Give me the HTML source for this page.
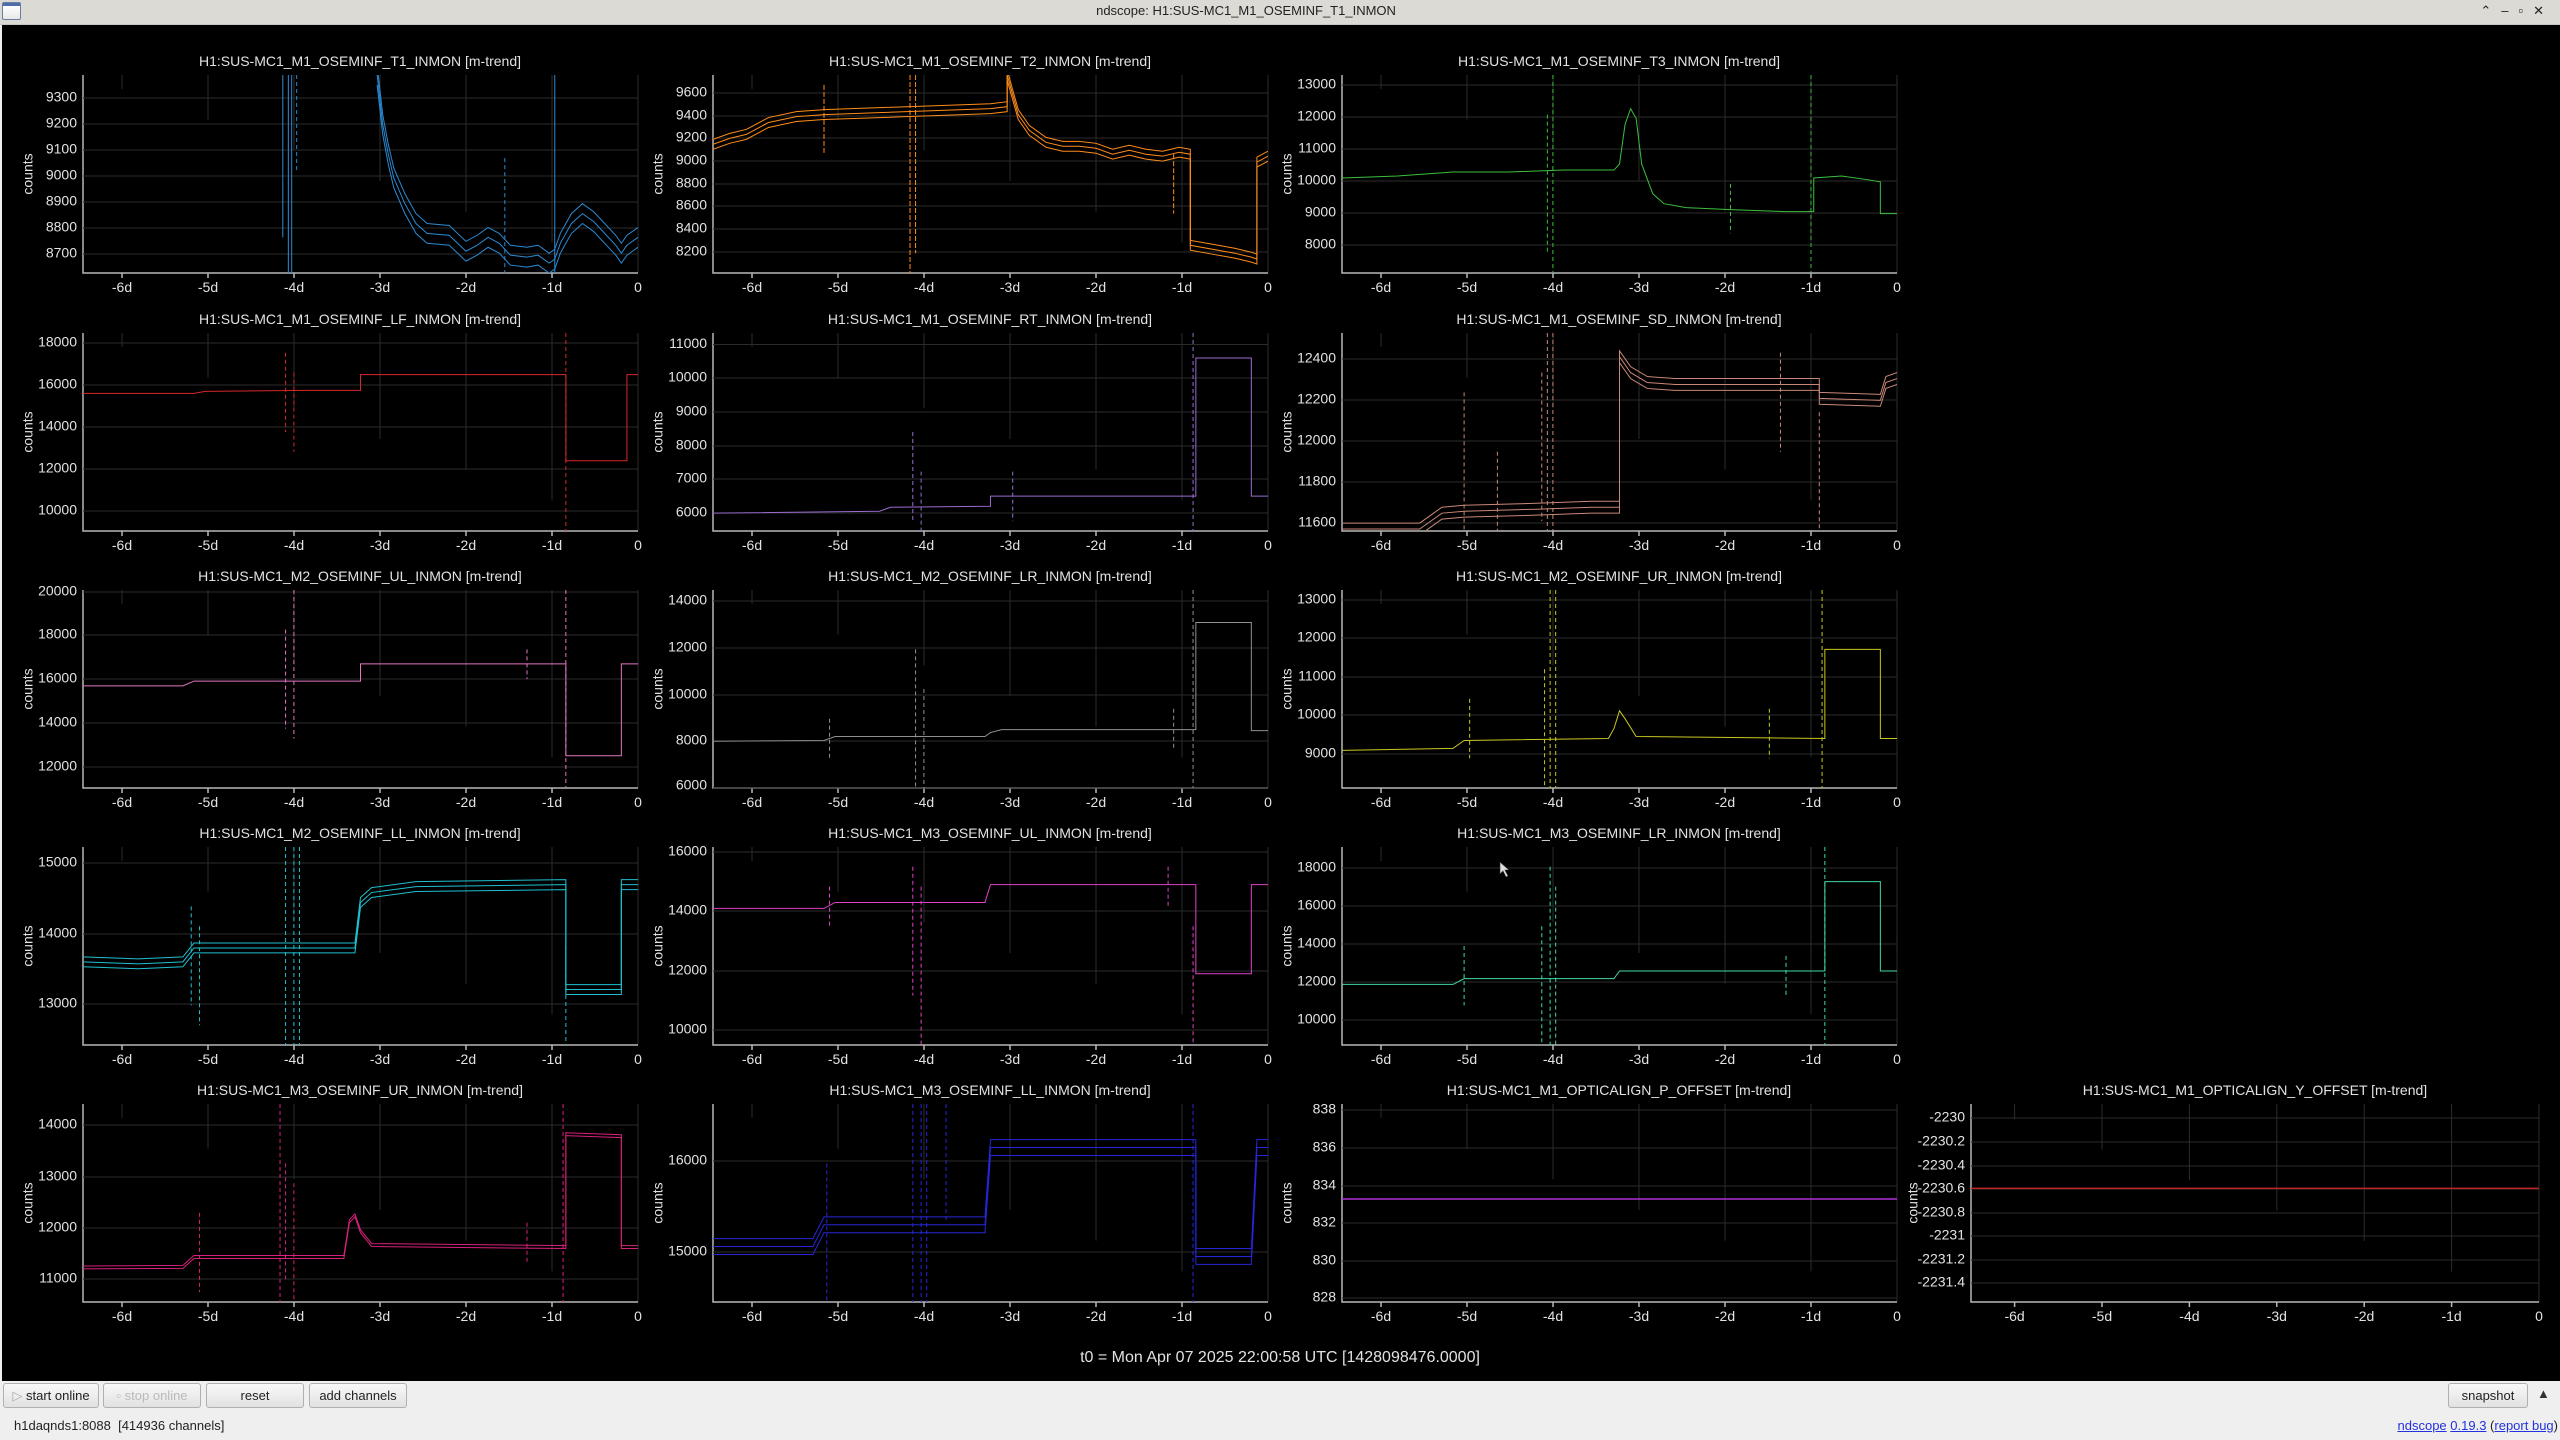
<!DOCTYPE html>
<html><head><meta charset="utf-8"><style>
*{margin:0;padding:0;box-sizing:border-box}
body{width:2560px;height:1440px;overflow:hidden;background:#efefef;font-family:"Liberation Sans",sans-serif;position:relative}
#tb{position:absolute;left:0;top:0;width:2560px;height:25px;background:#dcdad5;border-bottom:1px solid #c8c6c0;font-size:13px;color:#222;line-height:22px}
#tt{position:absolute;left:1246px;top:0;transform:translateX(-50%);white-space:nowrap}
#ic{position:absolute;left:2px;top:2px;width:19px;height:18px;border:1px solid #6a7fa0;border-radius:2px;background:linear-gradient(#4c6fa8 0 3px,#fff 3px,#e8e8e8)}
#wc{position:absolute;right:6px;top:0;font-size:13px;letter-spacing:10px}
#main{position:absolute;left:2px;top:25px;width:2558px;height:1356px;background:#000}
svg text{font-family:"Liberation Sans",sans-serif}
.t{font-size:14px;fill:#e2e2e2}
.yl{text-anchor:end;dominant-baseline:middle}
.xl{text-anchor:middle}
.ti{text-anchor:middle;font-size:14px;fill:#e2e2e2}
.g{stroke:#2c2c2c;stroke-width:1}
.ax{stroke:#b8b8b8;stroke-width:1.5}
.d path,.d use{vector-effect:non-scaling-stroke;fill:none}
.btn{position:absolute;top:1383px;height:25px;border:1px solid #b0b0b0;border-radius:3px;background:linear-gradient(#f8f8f8,#e2e2e2);font-size:13px;color:#222;text-align:center;line-height:23px;white-space:nowrap}
</style></head><body>
<div id="tb"><div id="ic"></div><div id="tt">ndscope: H1:SUS-MC1_M1_OSEMINF_T1_INMON</div><div id="wc">⌃–▫✕</div></div>
<div id="main"></div>
<svg width="2560" height="1381" style="position:absolute;left:0;top:0">
<defs>
<g id="fr">
<path class="g" d="M39,0V198M125,0V198M211,0V198M297,0V198M383,0V198M469,0V198M555,0V198"/>
<path class="ax" d="M0,0V198H555M39,198v5M125,198v5M211,198v5M297,198v5M383,198v5M469,198v5"/>
</g>
<g id="fr4">
<path class="g" d="M43.6,0V198M131,0V198M218.4,0V198M305.8,0V198M393.2,0V198M480.6,0V198M568,0V198"/>
<path class="ax" d="M0,0V198H568M43.6,198v5M131,198v5M218.4,198v5M305.8,198v5M393.2,198v5M480.6,198v5"/>
</g>
</defs>

<!-- ROW 1 -->
<g transform="translate(83,75)">
<use href="#fr"/>
<path class="g" d="M0,23H555M0,49H555M0,75H555M0,101H555M0,127H555M0,153H555M0,179H555"/>
<text class="ti" x="277" y="-9">H1:SUS-MC1_M1_OSEMINF_T1_INMON [m-trend]</text>
<text class="t" transform="translate(-54,99) rotate(-90)" text-anchor="middle" dominant-baseline="middle">counts</text>
<text class="t yl" x="-6" y="23">9300</text><text class="t yl" x="-6" y="49">9200</text><text class="t yl" x="-6" y="75">9100</text><text class="t yl" x="-6" y="101">9000</text><text class="t yl" x="-6" y="127">8900</text><text class="t yl" x="-6" y="153">8800</text><text class="t yl" x="-6" y="179">8700</text>
<text class="t xl" x="39" y="217">-6d</text><text class="t xl" x="125" y="217">-5d</text><text class="t xl" x="211" y="217">-4d</text><text class="t xl" x="297" y="217">-3d</text><text class="t xl" x="383" y="217">-2d</text><text class="t xl" x="469" y="217">-1d</text><text class="t xl" x="555" y="217">0</text>
<svg class="d" width="555" height="198" viewBox="0 0 100 100" preserveAspectRatio="none" stroke="#2a8ad4" stroke-width="1">
<path id="p1" d="M53,0 L54,25 L55,40 L56,52 L58,65 L60,75 L62,80 L66,81 L69,89 L71,86 L73,82 L75,85 L77,91 L80,92 L82,91 L84,95 L85,93 L86,85 L88,75 L90,70 L92,74 L94,80 L96,86 L97,90 L98,86 L100,82"/>
<use href="#p1" transform="translate(0,-5)"/><use href="#p1" transform="translate(0,5)"/>
<path d="M36,0V82M37,0V100M37.6,0V100M85,0V100" stroke-width="1"/>
<path d="M38.5,0V48M76,42V100" stroke-dasharray="4 3" stroke-width="1"/>
</svg>
</g>

<g transform="translate(713,75)">
<use href="#fr"/>
<path class="g" d="M0,18H555M0,41H555M0,63H555M0,86H555M0,109H555M0,131H555M0,154H555M0,177H555"/>
<text class="ti" x="277" y="-9">H1:SUS-MC1_M1_OSEMINF_T2_INMON [m-trend]</text>
<text class="t" transform="translate(-54,99) rotate(-90)" text-anchor="middle" dominant-baseline="middle">counts</text>
<text class="t yl" x="-6" y="18">9600</text><text class="t yl" x="-6" y="41">9400</text><text class="t yl" x="-6" y="63">9200</text><text class="t yl" x="-6" y="86">9000</text><text class="t yl" x="-6" y="109">8800</text><text class="t yl" x="-6" y="131">8600</text><text class="t yl" x="-6" y="154">8400</text><text class="t yl" x="-6" y="177">8200</text>
<text class="t xl" x="39" y="217">-6d</text><text class="t xl" x="125" y="217">-5d</text><text class="t xl" x="211" y="217">-4d</text><text class="t xl" x="297" y="217">-3d</text><text class="t xl" x="383" y="217">-2d</text><text class="t xl" x="469" y="217">-1d</text><text class="t xl" x="555" y="217">0</text>
<svg class="d" width="555" height="198" viewBox="0 0 100 100" preserveAspectRatio="none" stroke="#ff8c1a" stroke-width="1">
<path id="p2" d="M0,35 L3,32 L6,30 L10,24 L15,21 L20,20 L30,19 L40,18 L50,17 L53,16 L53,0 L55,20 L57,28 L60,34 L63,36 L66,36 L69,37 L72,40 L75,38 L78,40 L81,41 L84,39 L86,40 L86,86 L90,88 L94,90 L97,92 L98,93 L98,44 L100,41"/>
<use href="#p2" transform="translate(0,-2.5)"/><use href="#p2" transform="translate(0,2.5)"/>
<path d="M35.5,0V100M36.5,0V90M20,5V40M83,40V70" stroke-width="1" stroke-dasharray="5 2"/>
</svg>
</g>

<g transform="translate(1342,75)">
<use href="#fr"/>
<path class="g" d="M0,10H555M0,42H555M0,74H555M0,106H555M0,138H555M0,170H555"/>
<text class="ti" x="277" y="-9">H1:SUS-MC1_M1_OSEMINF_T3_INMON [m-trend]</text>
<text class="t" transform="translate(-54,99) rotate(-90)" text-anchor="middle" dominant-baseline="middle">counts</text>
<text class="t yl" x="-6" y="10">13000</text><text class="t yl" x="-6" y="42">12000</text><text class="t yl" x="-6" y="74">11000</text><text class="t yl" x="-6" y="106">10000</text><text class="t yl" x="-6" y="138">9000</text><text class="t yl" x="-6" y="170">8000</text>
<text class="t xl" x="39" y="217">-6d</text><text class="t xl" x="125" y="217">-5d</text><text class="t xl" x="211" y="217">-4d</text><text class="t xl" x="297" y="217">-3d</text><text class="t xl" x="383" y="217">-2d</text><text class="t xl" x="469" y="217">-1d</text><text class="t xl" x="555" y="217">0</text>
<svg class="d" width="555" height="198" viewBox="0 0 100 100" preserveAspectRatio="none" stroke="#3cbf3c" stroke-width="1">
<path id="p3" d="M0,52 L10,51 L20,49 L30,49 L40,48 L49,48 L50,45 L51,25 L52,17 L53,22 L54,45 L56,60 L58,65 L62,67 L70,68 L80,69 L85,69 L85,52 L90,51 L95,53 L97,54 L97,70 L100,70"/>
<path d="M37,20V90M38,0V100M84.5,0V100M70,55V80" stroke-width="1" stroke-dasharray="4 3"/>
</svg>
</g>

<!-- ROW 2 -->
<g transform="translate(83,333)">
<use href="#fr"/>
<path class="g" d="M0,10H555M0,52H555M0,94H555M0,136H555M0,178H555"/>
<text class="ti" x="277" y="-9">H1:SUS-MC1_M1_OSEMINF_LF_INMON [m-trend]</text>
<text class="t" transform="translate(-54,99) rotate(-90)" text-anchor="middle" dominant-baseline="middle">counts</text>
<text class="t yl" x="-6" y="10">18000</text><text class="t yl" x="-6" y="52">16000</text><text class="t yl" x="-6" y="94">14000</text><text class="t yl" x="-6" y="136">12000</text><text class="t yl" x="-6" y="178">10000</text>
<text class="t xl" x="39" y="217">-6d</text><text class="t xl" x="125" y="217">-5d</text><text class="t xl" x="211" y="217">-4d</text><text class="t xl" x="297" y="217">-3d</text><text class="t xl" x="383" y="217">-2d</text><text class="t xl" x="469" y="217">-1d</text><text class="t xl" x="555" y="217">0</text>
<svg class="d" width="555" height="198" viewBox="0 0 100 100" preserveAspectRatio="none" stroke="#d62728" stroke-width="1">
<path id="p4" d="M0,30.5 L20,30.5 L22,29.5 L40,29 L50,29 L50,21 L87,21 L87,64.5 L98,64.5 L98,21 L100,21"/>
<path d="M36.5,10V50M38,20V60M87,0V100" stroke-width="1" stroke-dasharray="4 3"/>
</svg>
</g>

<g transform="translate(713,333)">
<use href="#fr"/>
<path class="g" d="M0,11.5H555M0,45H555M0,79H555M0,113H555M0,146H555M0,180H555"/>
<text class="ti" x="277" y="-9">H1:SUS-MC1_M1_OSEMINF_RT_INMON [m-trend]</text>
<text class="t" transform="translate(-54,99) rotate(-90)" text-anchor="middle" dominant-baseline="middle">counts</text>
<text class="t yl" x="-6" y="11.5">11000</text><text class="t yl" x="-6" y="45">10000</text><text class="t yl" x="-6" y="79">9000</text><text class="t yl" x="-6" y="113">8000</text><text class="t yl" x="-6" y="146">7000</text><text class="t yl" x="-6" y="180">6000</text>
<text class="t xl" x="39" y="217">-6d</text><text class="t xl" x="125" y="217">-5d</text><text class="t xl" x="211" y="217">-4d</text><text class="t xl" x="297" y="217">-3d</text><text class="t xl" x="383" y="217">-2d</text><text class="t xl" x="469" y="217">-1d</text><text class="t xl" x="555" y="217">0</text>
<svg class="d" width="555" height="198" viewBox="0 0 100 100" preserveAspectRatio="none" stroke="#9a6cd0" stroke-width="1">
<path id="p5" d="M0,91 L30,90 L32,88 L50,87.5 L50,82.4 L87,82.4 L87,12.6 L97,12.6 L97,82.4 L100,82.4"/>
<path d="M36,50V95M37.5,70V100M86.5,0V100M54,70V95" stroke-width="1" stroke-dasharray="4 3"/>
</svg>
</g>

<g transform="translate(1342,333)">
<use href="#fr"/>
<path class="g" d="M0,26H555M0,67H555M0,108H555M0,149H555M0,190H555"/>
<text class="ti" x="277" y="-9">H1:SUS-MC1_M1_OSEMINF_SD_INMON [m-trend]</text>
<text class="t" transform="translate(-54,99) rotate(-90)" text-anchor="middle" dominant-baseline="middle">counts</text>
<text class="t yl" x="-6" y="26">12400</text><text class="t yl" x="-6" y="67">12200</text><text class="t yl" x="-6" y="108">12000</text><text class="t yl" x="-6" y="149">11800</text><text class="t yl" x="-6" y="190">11600</text>
<text class="t xl" x="39" y="217">-6d</text><text class="t xl" x="125" y="217">-5d</text><text class="t xl" x="211" y="217">-4d</text><text class="t xl" x="297" y="217">-3d</text><text class="t xl" x="383" y="217">-2d</text><text class="t xl" x="469" y="217">-1d</text><text class="t xl" x="555" y="217">0</text>
<svg class="d" width="555" height="198" viewBox="0 0 100 100" preserveAspectRatio="none" stroke="#c98878" stroke-width="1">
<path id="p6" d="M0,99 L14,99 L16,95 L18,91 L22,90 L35,89 L45,88 L50,88 L50,12 L52,20 L55,25 L60,26 L70,26 L86,26 L86,33 L97,34 L98,25 L100,23"/>
<use href="#p6" transform="translate(0,-3)"/><use href="#p6" transform="translate(0,3)"/>
<path d="M22,30V100M28,60V100M36,20V95M37,0V100M38,0V100M86,40V100M79,10V60" stroke-width="1" stroke-dasharray="4 3"/>
</svg>
</g>

<!-- ROW 3 -->
<g transform="translate(83,590)">
<use href="#fr"/>
<path class="g" d="M0,2H555M0,45H555M0,89H555M0,133H555M0,177H555"/>
<text class="ti" x="277" y="-9">H1:SUS-MC1_M2_OSEMINF_UL_INMON [m-trend]</text>
<text class="t" transform="translate(-54,99) rotate(-90)" text-anchor="middle" dominant-baseline="middle">counts</text>
<text class="t yl" x="-6" y="2">20000</text><text class="t yl" x="-6" y="45">18000</text><text class="t yl" x="-6" y="89">16000</text><text class="t yl" x="-6" y="133">14000</text><text class="t yl" x="-6" y="177">12000</text>
<text class="t xl" x="39" y="217">-6d</text><text class="t xl" x="125" y="217">-5d</text><text class="t xl" x="211" y="217">-4d</text><text class="t xl" x="297" y="217">-3d</text><text class="t xl" x="383" y="217">-2d</text><text class="t xl" x="469" y="217">-1d</text><text class="t xl" x="555" y="217">0</text>
<svg class="d" width="555" height="198" viewBox="0 0 100 100" preserveAspectRatio="none" stroke="#e377c2" stroke-width="1">
<path id="p7" d="M0,48.4 L18,48.4 L20,46 L50,46 L50,37.3 L87,37.3 L87,83.7 L97,83.7 L97,37.3 L100,37.3"/>
<path d="M36.5,20V70M38,0V75M87,0V100M80,30V45" stroke-width="1" stroke-dasharray="4 3"/>
</svg>
</g>

<g transform="translate(713,590)">
<use href="#fr"/>
<path class="g" d="M0,11H555M0,58H555M0,105H555M0,151H555M0,198H555"/>
<text class="ti" x="277" y="-9">H1:SUS-MC1_M2_OSEMINF_LR_INMON [m-trend]</text>
<text class="t" transform="translate(-54,99) rotate(-90)" text-anchor="middle" dominant-baseline="middle">counts</text>
<text class="t yl" x="-6" y="11">14000</text><text class="t yl" x="-6" y="58">12000</text><text class="t yl" x="-6" y="105">10000</text><text class="t yl" x="-6" y="151">8000</text><text class="t yl" x="-6" y="196">6000</text>
<text class="t xl" x="39" y="217">-6d</text><text class="t xl" x="125" y="217">-5d</text><text class="t xl" x="211" y="217">-4d</text><text class="t xl" x="297" y="217">-3d</text><text class="t xl" x="383" y="217">-2d</text><text class="t xl" x="469" y="217">-1d</text><text class="t xl" x="555" y="217">0</text>
<svg class="d" width="555" height="198" viewBox="0 0 100 100" preserveAspectRatio="none" stroke="#909090" stroke-width="1">
<path id="p8" d="M0,76.4 L20,76 L22,74 L49,74 L50,72 L52,70.5 L87,70.5 L87,16.4 L97,16.4 L97,71 L100,71"/>
<path d="M21,65V85M36.5,30V100M38,50V100M86.5,0V100M83,60V80" stroke-width="1" stroke-dasharray="4 3"/>
</svg>
</g>

<g transform="translate(1342,590)">
<use href="#fr"/>
<path class="g" d="M0,10H555M0,48H555M0,87H555M0,125H555M0,164H555"/>
<text class="ti" x="277" y="-9">H1:SUS-MC1_M2_OSEMINF_UR_INMON [m-trend]</text>
<text class="t" transform="translate(-54,99) rotate(-90)" text-anchor="middle" dominant-baseline="middle">counts</text>
<text class="t yl" x="-6" y="10">13000</text><text class="t yl" x="-6" y="48">12000</text><text class="t yl" x="-6" y="87">11000</text><text class="t yl" x="-6" y="125">10000</text><text class="t yl" x="-6" y="164">9000</text>
<text class="t xl" x="39" y="217">-6d</text><text class="t xl" x="125" y="217">-5d</text><text class="t xl" x="211" y="217">-4d</text><text class="t xl" x="297" y="217">-3d</text><text class="t xl" x="383" y="217">-2d</text><text class="t xl" x="469" y="217">-1d</text><text class="t xl" x="555" y="217">0</text>
<svg class="d" width="555" height="198" viewBox="0 0 100 100" preserveAspectRatio="none" stroke="#c8c820" stroke-width="1">
<path id="p9" d="M0,81 L20,80 L22,76 L48,75 L49,70 L50,61 L51,65 L53,74 L87,75 L87,30 L97,30 L97,75 L100,75"/>
<path d="M23,55V85M36.5,40V100M37.5,0V100M38.5,0V100M86.5,0V100M77,60V85" stroke-width="1" stroke-dasharray="4 3"/>
</svg>
</g>

<!-- ROW 4 -->
<g transform="translate(83,847)">
<use href="#fr"/>
<path class="g" d="M0,16H555M0,87H555M0,157H555"/>
<text class="ti" x="277" y="-9">H1:SUS-MC1_M2_OSEMINF_LL_INMON [m-trend]</text>
<text class="t" transform="translate(-54,99) rotate(-90)" text-anchor="middle" dominant-baseline="middle">counts</text>
<text class="t yl" x="-6" y="16">15000</text><text class="t yl" x="-6" y="87">14000</text><text class="t yl" x="-6" y="157">13000</text>
<text class="t xl" x="39" y="217">-6d</text><text class="t xl" x="125" y="217">-5d</text><text class="t xl" x="211" y="217">-4d</text><text class="t xl" x="297" y="217">-3d</text><text class="t xl" x="383" y="217">-2d</text><text class="t xl" x="469" y="217">-1d</text><text class="t xl" x="555" y="217">0</text>
<svg class="d" width="555" height="198" viewBox="0 0 100 100" preserveAspectRatio="none" stroke="#1fc0d0" stroke-width="1">
<path id="p10" d="M0,58 L10,59 L18,58 L20,51 L49,51 L50,28 L52,23 L60,20 L87,19 L87,72 L97,72 L97,19 L100,19"/>
<use href="#p10" transform="translate(0,-2.5)"/><use href="#p10" transform="translate(0,2.5)"/>
<path d="M19.5,30V80M21,40V90M36.5,0V100M38,0V100M39,0V100M87,50V100" stroke-width="1" stroke-dasharray="4 3"/>
</svg>
</g>

<g transform="translate(713,847)">
<use href="#fr"/>
<path class="g" d="M0,5H555M0,64H555M0,124H555M0,183H555"/>
<text class="ti" x="277" y="-9">H1:SUS-MC1_M3_OSEMINF_UL_INMON [m-trend]</text>
<text class="t" transform="translate(-54,99) rotate(-90)" text-anchor="middle" dominant-baseline="middle">counts</text>
<text class="t yl" x="-6" y="5">16000</text><text class="t yl" x="-6" y="64">14000</text><text class="t yl" x="-6" y="124">12000</text><text class="t yl" x="-6" y="183">10000</text>
<text class="t xl" x="39" y="217">-6d</text><text class="t xl" x="125" y="217">-5d</text><text class="t xl" x="211" y="217">-4d</text><text class="t xl" x="297" y="217">-3d</text><text class="t xl" x="383" y="217">-2d</text><text class="t xl" x="469" y="217">-1d</text><text class="t xl" x="555" y="217">0</text>
<svg class="d" width="555" height="198" viewBox="0 0 100 100" preserveAspectRatio="none" stroke="#e040c8" stroke-width="1">
<path id="p11" d="M0,31 L20,31 L22,28 L49,28 L50,19 L87,19 L87,64 L97,64 L97,19 L100,19"/>
<path d="M21,20V40M36,10V75M37.5,20V100M86.5,40V100M82,10V30" stroke-width="1" stroke-dasharray="4 3"/>
</svg>
</g>

<g transform="translate(1342,847)">
<use href="#fr"/>
<path class="g" d="M0,21H555M0,59H555M0,97H555M0,135H555M0,173H555"/>
<text class="ti" x="277" y="-9">H1:SUS-MC1_M3_OSEMINF_LR_INMON [m-trend]</text>
<text class="t" transform="translate(-54,99) rotate(-90)" text-anchor="middle" dominant-baseline="middle">counts</text>
<text class="t yl" x="-6" y="21">18000</text><text class="t yl" x="-6" y="59">16000</text><text class="t yl" x="-6" y="97">14000</text><text class="t yl" x="-6" y="135">12000</text><text class="t yl" x="-6" y="173">10000</text>
<text class="t xl" x="39" y="217">-6d</text><text class="t xl" x="125" y="217">-5d</text><text class="t xl" x="211" y="217">-4d</text><text class="t xl" x="297" y="217">-3d</text><text class="t xl" x="383" y="217">-2d</text><text class="t xl" x="469" y="217">-1d</text><text class="t xl" x="555" y="217">0</text>
<svg class="d" width="555" height="198" viewBox="0 0 100 100" preserveAspectRatio="none" stroke="#40d8a8" stroke-width="1">
<path id="p12" d="M0,69.4 L20,69.4 L22,66.5 L49,66.5 L50,62.6 L87,62.6 L87,17.5 L97,17.5 L97,62.6 L100,62.6"/>
<path d="M22,50V80M36,40V100M37.5,10V100M38.5,20V100M87,0V100M80,55V75" stroke-width="1" stroke-dasharray="4 3"/>
</svg>
</g>

<!-- ROW 5 -->
<g transform="translate(83,1104)">
<use href="#fr"/>
<path class="g" d="M0,21H555M0,73H555M0,124H555M0,175H555"/>
<text class="ti" x="277" y="-9">H1:SUS-MC1_M3_OSEMINF_UR_INMON [m-trend]</text>
<text class="t" transform="translate(-54,99) rotate(-90)" text-anchor="middle" dominant-baseline="middle">counts</text>
<text class="t yl" x="-6" y="21">14000</text><text class="t yl" x="-6" y="73">13000</text><text class="t yl" x="-6" y="124">12000</text><text class="t yl" x="-6" y="175">11000</text>
<text class="t xl" x="39" y="217">-6d</text><text class="t xl" x="125" y="217">-5d</text><text class="t xl" x="211" y="217">-4d</text><text class="t xl" x="297" y="217">-3d</text><text class="t xl" x="383" y="217">-2d</text><text class="t xl" x="469" y="217">-1d</text><text class="t xl" x="555" y="217">0</text>
<svg class="d" width="555" height="198" viewBox="0 0 100 100" preserveAspectRatio="none" stroke="#d8207c" stroke-width="1">
<path id="p13" d="M0,83.3 L18,83 L20,78 L47,78 L48,60 L49,57 L50,65 L52,72 L87,73 L87,16 L97,17 L97,73 L100,73"/>
<use href="#p13" transform="translate(0,-1.5)"/>
<path d="M21,55V95M35.5,0V100M36.5,30V90M38,40V100M86.5,0V100M80,60V80" stroke-width="1" stroke-dasharray="4 3"/>
</svg>
</g>

<g transform="translate(713,1104)">
<use href="#fr"/>
<path class="g" d="M0,57H555M0,148H555"/>
<text class="ti" x="277" y="-9">H1:SUS-MC1_M3_OSEMINF_LL_INMON [m-trend]</text>
<text class="t" transform="translate(-54,99) rotate(-90)" text-anchor="middle" dominant-baseline="middle">counts</text>
<text class="t yl" x="-6" y="57">16000</text><text class="t yl" x="-6" y="148">15000</text>
<text class="t xl" x="39" y="217">-6d</text><text class="t xl" x="125" y="217">-5d</text><text class="t xl" x="211" y="217">-4d</text><text class="t xl" x="297" y="217">-3d</text><text class="t xl" x="383" y="217">-2d</text><text class="t xl" x="469" y="217">-1d</text><text class="t xl" x="555" y="217">0</text>
<svg class="d" width="555" height="198" viewBox="0 0 100 100" preserveAspectRatio="none" stroke="#2626d8" stroke-width="1">
<path id="p14" d="M0,72 L18,72 L20,61 L49,61 L50,22 L87,22 L87,77 L97,77 L98,22 L100,22"/>
<use href="#p14" transform="translate(0,-4)"/><use href="#p14" transform="translate(0,4)"/>
<path d="M20.5,30V100M36,0V100M37.5,0V100M38.5,0V100M42,0V60M86.5,0V100" stroke-width="1" stroke-dasharray="4 3"/>
</svg>
</g>

<g transform="translate(1342,1104)">
<use href="#fr"/>
<path class="g" d="M0,6H555M0,44H555M0,82H555M0,119H555M0,157H555M0,194H555"/>
<text class="ti" x="277" y="-9">H1:SUS-MC1_M1_OPTICALIGN_P_OFFSET [m-trend]</text>
<text class="t" transform="translate(-54,99) rotate(-90)" text-anchor="middle" dominant-baseline="middle">counts</text>
<text class="t yl" x="-6" y="6">838</text><text class="t yl" x="-6" y="44">836</text><text class="t yl" x="-6" y="82">834</text><text class="t yl" x="-6" y="119">832</text><text class="t yl" x="-6" y="157">830</text><text class="t yl" x="-6" y="194">828</text>
<text class="t xl" x="39" y="217">-6d</text><text class="t xl" x="125" y="217">-5d</text><text class="t xl" x="211" y="217">-4d</text><text class="t xl" x="297" y="217">-3d</text><text class="t xl" x="383" y="217">-2d</text><text class="t xl" x="469" y="217">-1d</text><text class="t xl" x="555" y="217">0</text>
<svg class="d" width="555" height="198" viewBox="0 0 100 100" preserveAspectRatio="none" stroke="#b030d8" stroke-width="1.5">
<path d="M0,48 L100,48"/>
</svg>
</g>

<g transform="translate(1971,1104)">
<use href="#fr4"/>
<path class="g" d="M0,14H568M0,38H568M0,62H568M0,85H568M0,109H568M0,132H568M0,156H568M0,179H568"/>
<text class="ti" x="284" y="-9">H1:SUS-MC1_M1_OPTICALIGN_Y_OFFSET [m-trend]</text>
<text class="t" transform="translate(-57,99) rotate(-90)" text-anchor="middle" dominant-baseline="middle">counts</text>
<text class="t yl" x="-6" y="14">-2230</text><text class="t yl" x="-6" y="38">-2230.2</text><text class="t yl" x="-6" y="62">-2230.4</text><text class="t yl" x="-6" y="85">-2230.6</text><text class="t yl" x="-6" y="109">-2230.8</text><text class="t yl" x="-6" y="132">-2231</text><text class="t yl" x="-6" y="156">-2231.2</text><text class="t yl" x="-6" y="179">-2231.4</text>
<text class="t xl" x="43.6" y="217">-6d</text><text class="t xl" x="131" y="217">-5d</text><text class="t xl" x="218.4" y="217">-4d</text><text class="t xl" x="305.8" y="217">-3d</text><text class="t xl" x="393.2" y="217">-2d</text><text class="t xl" x="480.6" y="217">-1d</text><text class="t xl" x="568" y="217">0</text>
<svg class="d" width="568" height="198" viewBox="0 0 100 100" preserveAspectRatio="none" stroke="#c02828" stroke-width="1.5">
<path d="M0,42.6 L100,42.6"/>
</svg>
</g>

<text x="1280" y="1362" text-anchor="middle" style="font-size:16px;fill:#e2e2e2">t0 = Mon Apr 07 2025 22:00:58 UTC [1428098476.0000]</text>
<path d="M1500,862 l0,12 l3,-3 l3,6 l2,-1 l-3,-6 l4,0 z" fill="#ddd" stroke="#333" stroke-width="0.6"/>
</svg>

<div class="btn" style="left:3px;width:96px"><span style="color:#aaa">▷</span> start online</div>
<div class="btn" style="left:103px;width:98px;color:#bbb">▫ stop online</div>
<div class="btn" style="left:206px;width:98px">reset</div>
<div class="btn" style="left:309px;width:98px">add channels</div>
<div class="btn" style="left:2448px;width:80px">snapshot</div>
<div style="position:absolute;left:2537px;top:1386px;font-size:13px;color:#333">▲</div>
<div style="position:absolute;left:14px;top:1418px;font-size:13px;color:#222">h1daqnds1:8088&nbsp; [414936 channels]</div>
<div style="position:absolute;right:2px;top:1418px;font-size:13px;color:#222"><span style="color:#2233dd;text-decoration:underline">ndscope</span> <span style="color:#2233dd;text-decoration:underline">0.19.3</span> (<span style="color:#2233dd;text-decoration:underline">report bug</span>)</div>
</body></html>
